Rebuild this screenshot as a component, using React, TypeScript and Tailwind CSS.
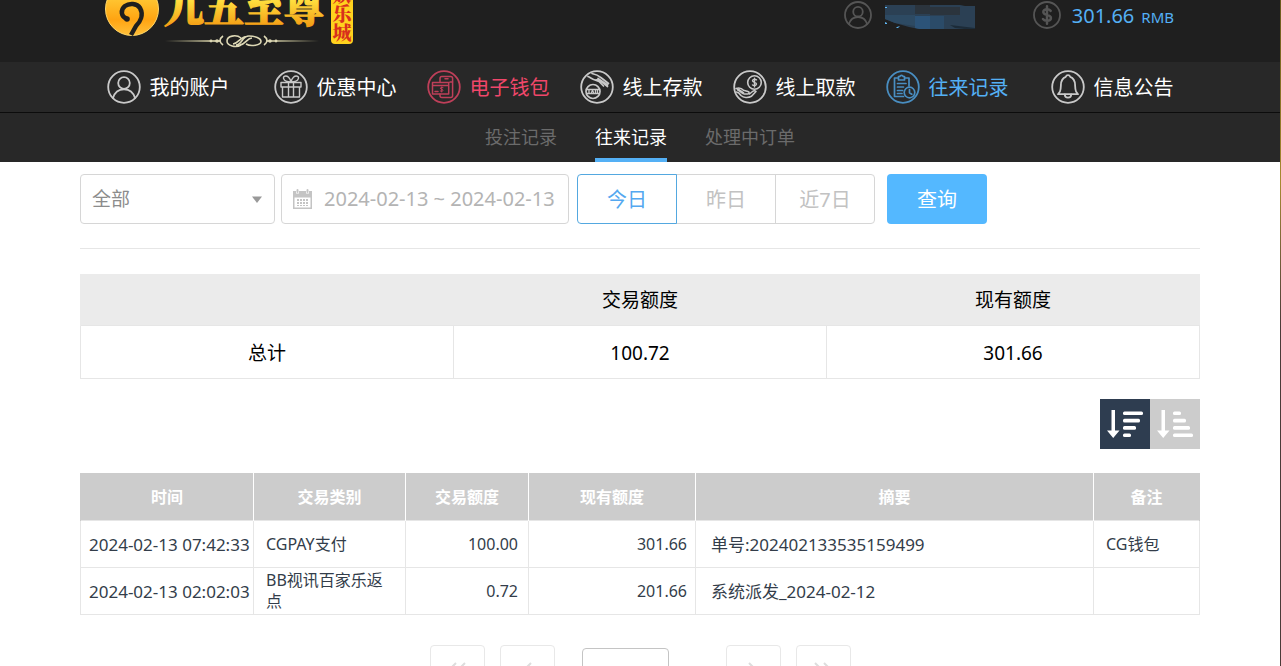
import { useState } from "react";
import type { ReactNode } from "react";
import clsx from "clsx";

// ── 类型 ────────────────────────────────────────────────
interface RecordRow {
  time: string;
  type: string;
  amount: string;
  balance: string;
  summary: string;
  remark: string;
}

interface NavItem {
  label: string;
  icon: ReactNode;
  className: string;
}

// ── 图标 ────────────────────────────────────────────────
function RoundIcon({ children, size = 34 }: { children: ReactNode; size?: number }) {
  return (
    <svg
      width={size}
      height={size}
      viewBox="0 0 34 34"
      fill="none"
      stroke="currentColor"
      strokeWidth={size < 34 ? 2.2 : 1.8}
      strokeLinecap="round"
      strokeLinejoin="round"
      className="shrink-0"
      aria-hidden="true"
    >
      <circle cx="17" cy="17" r="15.8" />
      {children}
    </svg>
  );
}

const userShape = (
  <>
    <circle cx="17" cy="13" r="5.8" />
    <path d="M6 28c1.6-5.4 5.600-8.600 11-8.600s9.400 3.200 11 8.600" />
  </>
);

const giftShape = (
  <g strokeWidth="1.4">
    <path d="M7 12.500h20v4.500H7zM8.500 17v10h17V17M14.500 12.500V27M19.500 12.500V27" />
    <path d="M17 12c-1-4-3.500-6.500-6.200-5.800-2.300.8-1.300 4 1.200 5 1.500.6 3.500.8 5 .8zM17 12c1-4 3.500-6.500 6.200-5.800 2.300.8 1.300 4-1.200 5-1.500.6-3.500.8-5 .8z" />
  </g>
);

const walletShape = (
  <g strokeWidth="1.5">
    <path d="M13 12V8.500c0-1.200.6-2 1.800-2h9c1.200 0 1.800.8 1.800 2v17c0 1.200-.6 2-1.800 2h-9c-1.200 0-1.800-.8-1.800-2v-1.500" />
    <path d="M5.500 12.500h16.200v11.500H5.500zM5.500 15.500h16.200M8 21.500h3M18 8.800h3M23 12h2.500" />
    <path d="M16 17.500c-1.500-.6-2.600 0-2.600.8 0 1.400 2.600.7 2.600 2 0 1-1.500 1.300-2.700.7M14.700 17v5" strokeWidth="1" />
  </g>
);

const depositShape = (
  <g strokeWidth="1.7">
    <path d="M12 3.500c4 .8 6.500 2 9.500 4.500l7 5.500M8 6.500c2.500 1 4 2.800 7 3.500l4 1.500 4.500 4.500M15 10c3-1 5 .5 7 2l5.500 4.500M18 8.500l9.500 6.500" />
    <circle cx="13" cy="21.500" r="7" />
    <path d="M6.500 19.500h13M6.500 23.500h13M9 22.500v-2.200M11.500 22.500l1-2.200 1 2.200M15.500 22.500v-2.200M17.500 22.500v-2.200" strokeWidth="1.300" />
  </g>
);

const withdrawShape = (
  <g strokeWidth="1.600">
    <circle cx="21.500" cy="12.500" r="6.800" />
    <path d="M23.500 9.800c-1.700-1-4-.5-4 1 0 2.100 4 1.200 4 3.300 0 1.500-2.400 2-4 .9M21.500 8.300v8.600" strokeWidth="1.400" />
    <path d="M3 18.500c3-1 5.500-.5 7.500 1.800l4.500 1.200c1.500.5 1.500 2.300-.2 2.500H11M3.500 22c2 .2 3 1.200 4.500 3.500 2.500 2.300 7 2.700 10.500.8l4.500-4.800c-1-1.300-2.500-.8-3.500 0l-3 2.500" />
    <path d="M5 19.500l5 3.500" strokeWidth="2.600" />
  </g>
);

const recordShape = (
  <g strokeWidth="1.700">
    <path d="M12.500 8H8.500v18.500h9M18.500 8H23v8M12.500 6.500h1.300a1.800 1.800 0 0 1 3.400 0h1.300v3.500h-6z" />
    <path d="M11.500 13.500h8.500M11.500 17h6M11.500 20.500h5M11.500 23.500h4.500" />
    <circle cx="23.500" cy="22.500" r="5.300" />
    <path d="M23.500 19.500v3.200l2.300 1.500" />
  </g>
);

const bellShape = (
  <>
    <path d="M7 24.200h20l-2-2.700c-.8-1.800-.8-4-.9-6.500-.1-4-1.800-7-4.900-8.200a2.300 2.300 0 0 0-4.400 0c-3.100 1.200-4.800 4.200-4.900 8.200-.1 2.500-.1 4.700-.9 6.500z" />
    <path d="M13.800 24.500a3.200 3.200 0 0 0 6.400 0" />
  </>
);

const dollarShape = (
  <path d="M21.500 12c-1.200-1.500-2.700-2-4.500-2-2.700 0-4.500 1.300-4.500 3.300 0 4.700 9.300 2.300 9.300 7.200 0 2.200-2 3.500-4.800 3.500-2 0-3.800-.7-4.900-2.200M17 6.500v21" strokeWidth="3" />
);

function CalendarIcon() {
  return (
    <svg width="21" height="20" viewBox="0 0 21 20" className="shrink-0 text-[#c4c4c4]" fill="currentColor" aria-hidden="true">
      <path d="M1 2h3v2.500h3V2h7v2.500h3V2h3v5.500H1z" />
      <rect x="4.500" y="0" width="2" height="4" rx="1" />
      <rect x="14.500" y="0" width="2" height="4" rx="1" />
      <path d="M1 7h19v13H1zM2.500 8.500v10h16v-10z" fillRule="evenodd" />
      <path d="M5 10h2v2H5zM8 10h2v2H8zM11 10h2v2h-2zM14 10h2v2h-2zM5 13h2v2H5zM8 13h2v2H8zM11 13h2v2h-2zM14 13h2v2h-2zM5 16h2v1H5zM8 16h2v1H8zM11 16h2v1h-2zM14 16h2v1h-2z" />
    </svg>
  );
}

function SortIcon({ widths }: { widths: number[] }) {
  return (
    <svg width="50" height="50" viewBox="0 0 50 50" fill="currentColor" aria-hidden="true">
      <path d="M11.500 11h3.500v20.500h4.500L13.200 39 7 31.500h4.500z" />
      {widths.map((w, i) => (
        <rect key={i} x="23" y={12.500 + i * 7.300} width={w} height="3.600" rx="1.500" />
      ))}
    </svg>
  );
}

function Chevrons({ d }: { d: string }) {
  return (
    <svg width="24" height="16" viewBox="0 0 24 16" fill="none" stroke="currentColor" strokeWidth="2" className="mx-auto" aria-hidden="true">
      <path d={d} />
    </svg>
  );
}

function Logo() {
  return (
    <svg width="250" height="80" viewBox="0 0 250 80" role="img" aria-label="九五至尊娱乐城">
      <defs>
        <linearGradient id="gold" x1="0" y1="0" x2="0" y2="1">
          <stop offset="0" stopColor="#fff2a0" />
          <stop offset="0.45" stopColor="#ffdc3c" />
          <stop offset="1" stopColor="#f08c0a" />
        </linearGradient>
        <linearGradient id="coin" x1="0" y1="0" x2="0" y2="1">
          <stop offset="0" stopColor="#ffe04a" />
          <stop offset="0.7" stopColor="#ffa412" />
          <stop offset="1" stopColor="#ffc03a" />
        </linearGradient>
        <linearGradient id="rule" x1="0" y1="0" x2="1" y2="0">
          <stop offset="0" stopColor="#b9b48a" stopOpacity="0" />
          <stop offset="0.35" stopColor="#c9c4a0" />
          <stop offset="0.65" stopColor="#c9c4a0" />
          <stop offset="1" stopColor="#b9b48a" stopOpacity="0" />
        </linearGradient>
      </defs>
      <circle cx="28" cy="41" r="26.500" fill="url(#coin)" stroke="#ffd768" />
      {/* 圆标中间的「9」形镂空 */}
      <path
        d="M23 51c-6-2-7-9-2-13 4-3 12-3 15 2 4 7 0 14-4 18l-5 9"
        fill="none"
        stroke="#1f1f1f"
        strokeWidth="4.500"
        strokeLinejoin="round"
      />
      <circle cx="23" cy="51" r="2.800" fill="#1f1f1f" />
      <text
        x="60"
        y="54"
        fontSize="40"
        fill="url(#gold)"
        stroke="url(#gold)"
        strokeWidth="1.200"
        className="font-['Noto_Serif_CJK_SC','Noto_Sans_CJK_SC',serif] font-black"
      >
        九五至尊
      </text>
      <rect x="61" y="72" width="154" height="2" fill="url(#rule)" />
      <rect x="117" y="67" width="45" height="12" fill="#1f1f1f" />
      <g fill="none" stroke="#ddd8b5" strokeWidth="1.600">
        <path d="M137 77c-5 3-14 1-14-4s9-7 14-3M132 77c6 0 6-9 13-9 6 0 12 2 12 5.500S147 79 142 76M129 76c6-1 8-8 14-7.500M136 77c6-1 7-7 12-7" />
        <path d="M119 68c-4 3-4 6 0 9M160 68c4 3 4 6 0 9" />
      </g>
      <g fill="#ddd8b5">
        <circle cx="113" cy="73" r="1.800" />
        <circle cx="107" cy="73" r="1.400" />
        <circle cx="166" cy="73" r="1.800" />
        <circle cx="172" cy="73" r="1.400" />
      </g>
      <rect x="227" y="2" width="22" height="74" rx="4" fill="#ffd21e" />
      <text
        x="238"
        y="17"
        fontSize="19"
        fill="#d8301c"
        className="font-['Noto_Serif_CJK_SC','Noto_Sans_CJK_SC',serif] font-black [writing-mode:vertical-rl]"
      >
        娱乐城
      </text>
    </svg>
  );
}

// 用户名打码
function MaskedName() {
  return (
    <svg width="92" height="28" viewBox="0 0 92 28" role="img" aria-label="用户名已隐藏">
      <path d="M1 4h75l5 1h10v24H40l-15-3-14-4-10-4z" fill="#2b4054" />
      <path d="M31 4h15v9H31zM46 6h30v8H46z" fill="#2b343d" />
      <path d="M1 14h30v11L11 22 1 18z" fill="#2d4a63" />
      <path d="M31 15h15v14H40l-9-2z" fill="#2c5378" />
      <path d="M46 15h14v14H46z" fill="#2b4b68" />
      <path d="M66 24l25 3v2l-20-2z" fill="#1c2b38" />
      <path d="M1 6h2v1H1zM1 21l2 1v1H1zM13 26l3-1-2 2h-2z" fill="#5fb8f5" />
    </svg>
  );
}

// ── 数据 ────────────────────────────────────────────────
const NAV: NavItem[] = [
  { label: "我的账户", icon: userShape,     className: "text-white mr-3.5" },
  { label: "优惠中心", icon: giftShape,     className: "text-white" },
  { label: "电子钱包", icon: walletShape,   className: "text-[#f0476a]" },
  { label: "线上存款", icon: depositShape,  className: "text-white" },
  { label: "线上取款", icon: withdrawShape, className: "text-white" },
  { label: "往来记录", icon: recordShape,   className: "text-[#54b0f5]" },
  { label: "信息公告", icon: bellShape,     className: "text-white ml-3" },
];

const TABS   = ["投注记录", "往来记录", "处理中订单"];
const RANGES = ["今日", "昨日", "近7日"];

const COLUMNS = [
  { title: "时间",     width: "w-[173px]" },
  { title: "交易类别", width: "w-[152px]" },
  { title: "交易额度", width: "w-[123px]" },
  { title: "现有额度", width: "w-[167px]" },
  { title: "摘要",     width: "" },
  { title: "备注",     width: "w-[106px]" },
];

const ROWS: RecordRow[] = [
  {
    time: "2024-02-13 07:42:33",
    type: "CGPAY支付",
    amount: "100.00",
    balance: "301.66",
    summary: "单号:202402133535159499",
    remark: "CG钱包",
  },
  {
    time: "2024-02-13 02:02:03",
    type: "BB视讯百家乐返点",
    amount: "0.72",
    balance: "201.66",
    summary: "系统派发_2024-02-12",
    remark: "",
  },
];

// ── 页面 ────────────────────────────────────────────────
export default function App() {
  const [tab, setTab]     = useState(1);
  const [range, setRange] = useState(0);
  const [dates, setDates] = useState("2024-02-13 ~ 2024-02-13");
  const [desc, setDesc]   = useState(true);

  const rows = desc ? ROWS : [...ROWS].reverse();

  return (
    <div className="flex min-h-screen bg-white font-['Noto_Sans','Noto_Sans_CJK_SC',sans-serif]">
      <div className="min-w-0 flex-1">
        {/* 顶部 */}
        <header className="h-[62px] overflow-hidden bg-[#1f1f1f]">
          <div className="mx-auto flex max-w-[1120px] items-start justify-between pr-[26px] pl-6">
            <div className="-mt-8">
              <Logo />
            </div>
            <div className="flex h-[30px] items-center">
              <div className="flex items-center gap-3 text-[#555]">
                <RoundIcon size={28}>{userShape}</RoundIcon>
                <MaskedName />
              </div>
              <div className="ml-[57px] flex items-center gap-[11px] text-[#555]">
                <RoundIcon size={28}>{dollarShape}</RoundIcon>
                <p className="flex items-baseline gap-[7px] pt-0.5 text-xl text-[#54b0f5]">
                  301.66 <span className="text-[15px]">RMB</span>
                </p>
              </div>
            </div>
          </div>
        </header>

        {/* 主导航 */}
        <nav className="flex h-[50px] items-center justify-center gap-[30px] bg-[#282828]">
          {NAV.map((item) => (
            <a
              key={item.label}
              href="#"
              className={clsx("flex items-center gap-[9px] text-xl leading-7 whitespace-nowrap", item.className)}
            >
              <span className="opacity-75">
                <RoundIcon>{item.icon}</RoundIcon>
              </span>
              <span className="pt-0.5">{item.label}</span>
            </a>
          ))}
        </nav>

        {/* 子导航 */}
        <nav className="flex h-[50px] justify-center gap-[38px] border-t border-[#0c0c0c] bg-[#282828]">
          {TABS.map((label, i) => (
            <button
              key={label}
              type="button"
              onClick={() => setTab(i)}
              className={clsx(
                "border-b-4 pt-0.5 text-lg leading-none",
                tab === i ? "border-[#54b0f5] text-white" : "border-transparent text-[#6b6b6b]"
              )}
            >
              {label}
            </button>
          ))}
        </nav>

        <main className="mx-auto max-w-[1120px] pt-3 pb-8">
          {/* 查询条件 */}
          <form className="flex h-[50px]" onSubmit={(e) => e.preventDefault()}>
            <div className="relative w-[195px]">
              <select
                aria-label="交易类别"
                className="h-full w-full appearance-none rounded border border-[#d6d6d6] bg-white px-[11px] text-[19px] text-[#8c8c8c]"
              >
                <option>全部</option>
              </select>
              <svg
                width="10"
                height="8"
                viewBox="0 0 10 8"
                className="pointer-events-none absolute top-[22px] right-[13px] text-[#999]"
                fill="currentColor"
                aria-hidden="true"
              >
                <path d="M0 0.500h10L5 7z" />
              </svg>
            </div>
            <label className="ml-1.5 flex w-72 items-center gap-[11px] rounded border border-[#d6d6d6] pl-2.5">
              <CalendarIcon />
              <input
                aria-label="日期范围"
                value={dates}
                onChange={(e) => setDates(e.target.value)}
                className="w-full min-w-0 bg-transparent text-xl text-[#b4b4b4] outline-none"
              />
            </label>
            <div className="ml-2 flex">
              {RANGES.map((label, i) => (
                <button
                  key={label}
                  type="button"
                  onClick={() => setRange(i)}
                  className={clsx(
                    "w-[100px] border pt-0.5 text-xl first:rounded-l last:rounded-r not-first:-ml-px",
                    range === i ? "z-10 border-[#54a8e0] text-[#54a8f0]" : "border-[#d6d6d6] text-[#c2c2c2]"
                  )}
                >
                  {label}
                </button>
              ))}
            </div>
            <button type="submit" className="ml-3 w-[100px] rounded bg-[#54b8ff] pt-0.5 text-xl text-white">
              查询
            </button>
          </form>

          <hr className="mt-6 mb-[25px] border-[#e6e6e6]" />

          {/* 总计 */}
          <table className="w-full table-fixed border-collapse text-center text-[19px] leading-7 text-black">
            <thead>
              <tr className="h-[51px] bg-[#ebebeb]">
                <td className="border-l border-[#ebebeb]" />
                <th className="pt-0.5 font-normal">交易额度</th>
                <th className="pt-0.5 font-normal">现有额度</th>
              </tr>
            </thead>
            <tbody>
              <tr className="h-[53px]">
                <td className="border border-[#e6e6e6] pt-0.5">总计</td>
                <td className="border border-[#e6e6e6] pt-0.5">100.72</td>
                <td className="border border-[#e6e6e6] pt-0.5">301.66</td>
              </tr>
            </tbody>
          </table>

          {/* 排序 */}
          <div className="mt-5 flex justify-end text-white">
            <button
              type="button"
              title="降序"
              onClick={() => setDesc(true)}
              className={desc ? "bg-[#2e3d50]" : "bg-[#ccc]"}
            >
              <SortIcon widths={[20, 17, 13, 8]} />
            </button>
            <button
              type="button"
              title="升序"
              onClick={() => setDesc(false)}
              className={desc ? "bg-[#ccc]" : "bg-[#2e3d50]"}
            >
              <SortIcon widths={[8, 13, 17, 20]} />
            </button>
          </div>

          {/* 明细 */}
          <table className="mt-6 w-full table-fixed border-collapse text-base leading-[21px] text-[#333d4a]">
            <thead>
              <tr className="h-12 bg-[#ccc] text-white">
                {COLUMNS.map((col) => (
                  <th
                    key={col.title}
                    className={clsx(
                      "border-r border-white pt-0.5 font-bold first:border-l first:border-l-[#ccc] last:border-r-[#ccc]",
                      col.width
                    )}
                  >
                    {col.title}
                  </th>
                ))}
              </tr>
            </thead>
            <tbody>
              {rows.map((row) => (
                <tr key={row.time} className="h-[47px]">
                  <td className="border border-[#e6e6e6] pl-2 text-[17px] whitespace-nowrap">{row.time}</td>
                  <td className="border border-[#e6e6e6] px-3">{row.type}</td>
                  <td className="border border-[#e6e6e6] px-2.5 text-right">{row.amount}</td>
                  <td className="border border-[#e6e6e6] px-2 text-right">{row.balance}</td>
                  <td className="border border-[#e6e6e6] px-[15px] text-[17px]">{row.summary}</td>
                  <td className="border border-[#e6e6e6] px-3">{row.remark}</td>
                </tr>
              ))}
            </tbody>
          </table>

          {/* 分页 */}
          <div className="mt-[30px] flex items-center justify-center text-xl text-[#ddd]">
            <button type="button" aria-label="第一页" className="h-[50px] w-[55px] rounded border border-[#e8e8e8]">
              <Chevrons d="M11 1L4 8l7 7M20 1l-7 7 7 7" />
            </button>
            <button type="button" aria-label="上一页" className="ml-[15px] h-[50px] w-[55px] rounded border border-[#e8e8e8]">
              <Chevrons d="M16 1L9 8l7 7" />
            </button>
            <input
              aria-label="页码"
              className="ml-[27px] h-11 w-[87px] rounded border border-[#c4c4c4] text-center text-[#888]"
            />
            <button type="button" aria-label="下一页" className="ml-[57px] h-[50px] w-[55px] rounded border border-[#e8e8e8]">
              <Chevrons d="M8 1l7 7-7 7" />
            </button>
            <button type="button" aria-label="最后一页" className="ml-[15px] h-[50px] w-[55px] rounded border border-[#e8e8e8]">
              <Chevrons d="M4 1l7 7-7 7M13 1l7 7-7 7" />
            </button>
          </div>
        </main>
      </div>
      <div className="w-px bg-linear-to-b from-[#6b5a1e] via-[#a88a30] via-25% to-[#4a3b38] to-45%" />
    </div>
  );
}
